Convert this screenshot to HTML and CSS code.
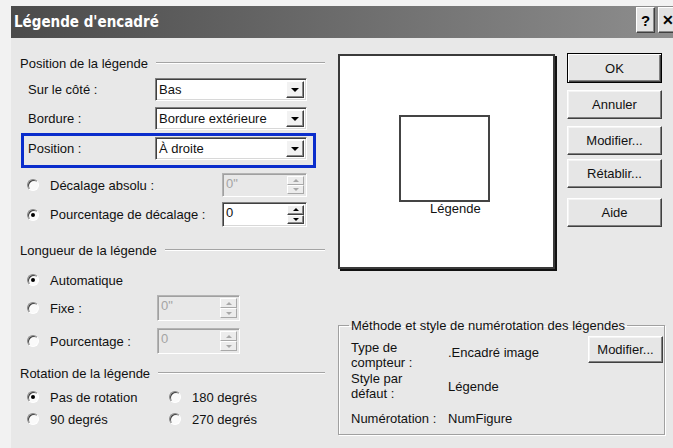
FILE: index.html
```html
<!DOCTYPE html>
<html lang="fr">
<head>
<meta charset="utf-8">
<title>Légende d'encadré</title>
<link rel="stylesheet" href="styles.css">
</head>
<body>
<div class="window">
  <div class="titlebar">
    <span class="title">Légende d'encadré</span>
    <span class="tb-buttons">
      <span class="tb-btn">?</span>
      <span class="tb-btn close">✕</span>
    </span>
  </div>

  <div class="client">
    <div class="left">
      <div class="sec">Position de la légende</div>

      <div class="field first">
        <span class="lbl">Sur le côté :</span>
        <span class="combo"><span class="val">Bas</span><span class="drop"><i class="tri-down"></i></span></span>
      </div>
      <div class="field">
        <span class="lbl">Bordure :</span>
        <span class="combo"><span class="val">Bordure extérieure</span><span class="drop"><i class="tri-down"></i></span></span>
      </div>
      <div class="field hl">
        <span class="lbl">Position :</span>
        <span class="combo"><span class="val">À droite</span><span class="drop"><i class="tri-down"></i></span></span>
      </div>

      <div class="opt r-dec">
        <span class="radio"></span>
        <span class="opt-text wide">Décalage absolu :</span>
        <span class="spin off"><span class="val">0"</span><span class="arrows"><span class="ab"><i class="tri-up"></i></span><span class="ab"><i class="tri-dn"></i></span></span></span>
      </div>
      <div class="opt r-pct">
        <span class="radio on"></span>
        <span class="opt-text wide">Pourcentage de décalage :</span>
        <span class="spin"><span class="val">0</span><span class="arrows"><span class="ab"><i class="tri-up"></i></span><span class="ab"><i class="tri-dn"></i></span></span></span>
      </div>

      <div class="sec s2">Longueur de la légende</div>

      <div class="opt r-auto">
        <span class="radio on"></span>
        <span class="opt-text">Automatique</span>
      </div>
      <div class="opt r-fixe">
        <span class="radio"></span>
        <span class="opt-text narrow">Fixe :</span>
        <span class="spin off short"><span class="val">0"</span><span class="arrows"><span class="ab"><i class="tri-up"></i></span><span class="ab"><i class="tri-dn"></i></span></span></span>
      </div>
      <div class="opt r-pct2">
        <span class="radio"></span>
        <span class="opt-text narrow">Pourcentage :</span>
        <span class="spin off short"><span class="val">0</span><span class="arrows"><span class="ab"><i class="tri-up"></i></span><span class="ab"><i class="tri-dn"></i></span></span></span>
      </div>

      <div class="sec s3">Rotation de la légende</div>

      <div class="rot-grid">
        <div class="opt"><span class="radio on"></span><span class="opt-text">Pas de rotation</span></div>
        <div class="opt"><span class="radio"></span><span class="opt-text">180 degrés</span></div>
        <div class="opt"><span class="radio"></span><span class="opt-text">90 degrés</span></div>
        <div class="opt"><span class="radio"></span><span class="opt-text">270 degrés</span></div>
      </div>
    </div>

    <div class="right">
      <div class="top-row">
        <div class="preview">
          <div class="frame"></div>
          <div class="cap">Légende</div>
        </div>
        <div class="btns">
          <span class="btn default">OK</span>
          <span class="btn b-cancel">Annuler</span>
          <span class="btn b-edit">Modifier...</span>
          <span class="btn b-reset">Rétablir...</span>
          <span class="btn b-help">Aide</span>
        </div>
      </div>

      <fieldset class="group">
        <legend>Méthode et style de numérotation des légendes</legend>
        <div class="gbody">
          <span class="g-lbl">Type de<br>compteur :</span>
          <span class="g-val top">.Encadré image</span>
          <span class="btn g-btn">Modifier...</span>

          <span class="g-lbl r2">Style par<br>défaut :</span>
          <span class="g-val r2">Légende</span>
          <span class="r2"></span>

          <span class="g-lbl r3">Numérotation :</span>
          <span class="g-val r3">NumFigure</span>
          <span class="r3"></span>
        </div>
      </fieldset>
    </div>
  </div>
</div>
</body>
</html>
```

FILE: styles.css
```css
* { box-sizing: border-box; }

body {
  margin: 0;
  width: 673px;
  height: 448px;
  overflow: hidden;
  background: #f2f2f2;
  font: 13px/15px "Liberation Sans", Arial, sans-serif;
  color: #111;
}

/* dialog window */
.window {
  margin: 6px 0 0 11px;
  width: 672px;
  height: 442px;
  background: #e8e8e8;
  display: flex;
  flex-direction: column;
}

.titlebar {
  flex: none;
  height: 32px;
  display: flex;
  align-items: center;
  background: linear-gradient(90deg, #4b4b4b, #8e8e8e);
  color: #fff;
}
.title {
  padding-left: 3px;
  font: bold 15px/19px "DejaVu Sans Condensed", "DejaVu Sans", sans-serif;
}
.tb-buttons {
  margin-left: auto;
  align-self: flex-start;
  display: flex;
  gap: 3px;
  padding: 1px 6px 0 0;
}
.tb-btn {
  width: 19px;
  height: 26px;
  display: flex;
  align-items: center;
  justify-content: center;
  background: #e2e2e2;
  border: 1px solid;
  border-color: #fff #404040 #404040 #fff;
  box-shadow: inset -1px -1px #8a8a8a;
  color: #000;
  font: bold 15px "Liberation Sans", Arial, sans-serif;
}
.tb-btn.close { font-size: 14px; }

.client {
  display: flex;
  padding-left: 9px;
}

/* left column */
.left {
  width: 305px;
  padding-top: 17px;
  display: flex;
  flex-direction: column;
}

.sec {
  height: 16px;
  display: flex;
  align-items: center;
  white-space: nowrap;
}
.sec::after {
  content: "";
  flex: 1;
  margin-left: 8px;
  border-top: 1px solid #a4a4a4;
  border-bottom: 1px solid #fff;
}
.sec.s2 { margin-top: 15px; }
.sec.s3 { margin-top: 11px; }

.field {
  display: flex;
  align-items: center;
  height: 23px;
  margin-top: 6px;
}
.field.first { margin-top: 7px; }
.field .lbl {
  width: 135px;
  padding-left: 8px;
}
.field.hl {
  margin-top: 3px;
  margin-left: 1px;
  width: 295px;
  height: 35px;
  border: 3px solid #0a2dcc;
  padding: 1px 0 5px;
}
.field.hl .lbl {
  width: 131px;
  padding-left: 4px;
}

/* drop-down list */
.combo {
  width: 152px;
  height: 23px;
  display: flex;
  padding: 2px;
  background: #fff;
  border: 1px solid;
  border-color: #808080 #fff #fff #808080;
  box-shadow: inset 1px 1px #404040, inset -1px -1px #d8d8d8;
}
.combo .val {
  flex: 1;
  padding-left: 1px;
  line-height: 17px;
  white-space: nowrap;
}
.drop {
  width: 18px;
  display: flex;
  align-items: center;
  justify-content: center;
  background: #f2f2f2;
  border: 1px solid;
  border-color: #fff #404040 #404040 #fff;
  box-shadow: inset -1px -1px #8a8a8a;
}
.tri-down {
  width: 0;
  height: 0;
  border-left: 4px solid transparent;
  border-right: 4px solid transparent;
  border-top: 4px solid #000;
}

/* radio options */
.opt {
  display: flex;
  align-items: center;
  height: 18px;
}
.radio {
  flex: none;
  margin-left: 7px;
  width: 12px;
  height: 12px;
  border-radius: 50%;
  background: #fafafa;
  border: 1px solid;
  border-color: #8a8a8a #fff #fff #8a8a8a;
  box-shadow: inset 1px 1px 0 #404040;
}
.radio.on::after {
  content: "";
  display: block;
  width: 4px;
  height: 4px;
  margin: 3px;
  border-radius: 50%;
  background: #000;
}
.opt-text {
  margin-left: 11px;
  white-space: nowrap;
}
.opt-text.wide { width: 172px; }
.opt-text.narrow { width: 107px; }

.r-dec { margin-top: 5px; height: 24px; }
.r-pct { margin-top: 5px; height: 25px; }
.r-auto { margin-top: 13px; }
.r-fixe { margin-top: 6px; height: 26px; }
.r-pct2 { margin-top: 7px; height: 26px; }

.rot-grid {
  margin-top: 7px;
  display: grid;
  grid-template-columns: 142px 1fr;
  grid-auto-rows: 18px;
  row-gap: 4px;
}

/* spin box */
.spin {
  width: 85px;
  height: 100%;
  display: flex;
  padding: 2px;
  background: #fff;
  border: 1px solid;
  border-color: #808080 #fff #fff #808080;
  box-shadow: inset 1px 1px #404040, inset -1px -1px #d8d8d8;
}
.spin.short { width: 83px; }
.spin .val {
  flex: 1;
  padding-left: 1px;
}
.arrows {
  width: 17px;
  display: flex;
  flex-direction: column;
}
.ab {
  flex: 1;
  display: flex;
  align-items: center;
  justify-content: center;
  background: #eeeeee;
  border: 1px solid;
  border-color: #fff #404040 #404040 #fff;
  box-shadow: inset -1px -1px #8a8a8a;
}
.tri-up, .tri-dn {
  width: 0;
  height: 0;
  border-left: 3px solid transparent;
  border-right: 3px solid transparent;
}
.tri-up { border-bottom: 3px solid #000; }
.tri-dn { border-top: 3px solid #000; }

.spin.off {
  background: #e8e8e8;
  color: #a4a4a4;
  border-color: #b4b4b4 #fff #fff #b4b4b4;
  box-shadow: inset 1px 1px #a0a0a0;
}
.spin.off .ab {
  background: #ececec;
  border-color: #fff #a8a8a8 #a8a8a8 #fff;
  box-shadow: none;
}
.spin.off .tri-up { border-bottom-color: #a8a8a8; }
.spin.off .tri-dn { border-top-color: #a8a8a8; }

/* right column */
.right {
  margin-left: 13px;
  width: 327px;
  padding-top: 16px;
}
.top-row {
  display: flex;
  align-items: flex-start;
}
.preview {
  width: 217px;
  height: 215px;
  padding: 59px 0 0 59px;
  background: #fff;
  border: 2px solid #3a3a3a;
  box-shadow: 2px 2px 0 #111;
}
.frame {
  width: 91px;
  height: 87px;
  border: 2px solid #444;
}
.cap {
  margin-left: 31px;
  line-height: 13px;
}

.btns {
  margin: -1px 0 0 12px;
  width: 95px;
  display: flex;
  flex-direction: column;
}
.btn {
  height: 29px;
  display: flex;
  align-items: center;
  justify-content: center;
  background: #e6e6e6;
  border: 1px solid;
  border-color: #fff #404040 #404040 #fff;
  box-shadow: inset -1px -1px #808080, inset 1px 1px #f4f4f4;
  color: #111;
  white-space: nowrap;
}
.btn.default {
  height: 30px;
  border: 1px solid #000;
  box-shadow: inset 1px 1px #fff, inset -1px -1px #404040, inset -2px -2px #808080;
}
.b-cancel { margin-top: 7px; }
.b-edit { margin-top: 7px; }
.b-reset { margin-top: 4px; }
.b-help { margin-top: 10px; }

/* numbering group */
.group {
  margin: 49px 0 0;
  width: 327px;
  min-width: 0;
  padding: 0 1px 8px 12px;
  border: 1px solid #a0a0a0;
  box-shadow: inset 1px 1px #fff, 1px 1px #fff;
}
.group legend {
  padding: 0 2px;
  margin-left: -2px;
  line-height: 15px;
}
.gbody {
  margin-top: 7px;
  display: grid;
  grid-template-columns: 97px 1fr 75px;
  align-items: center;
}
.g-val.top {
  align-self: start;
  margin-top: 5px;
}
.g-btn {
  align-self: start;
  margin-top: -4px;
  height: 27px;
}
.r2 { margin-top: 1px; }
.r3 { margin-top: 10px; }
.g-lbl, .g-val { white-space: nowrap; }
```
